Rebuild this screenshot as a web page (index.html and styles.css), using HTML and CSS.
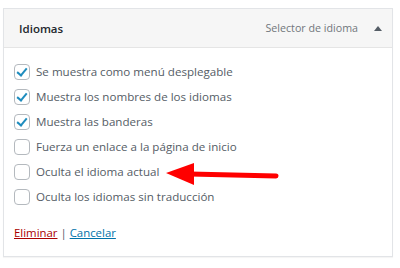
FILE: index.html
```html
<!DOCTYPE html>
<html lang="es">
<head>
    <meta charset="UTF-8">
    <title>Idiomas</title>
    <link rel="stylesheet" href="styles.css">
</head>
<body>
    <div class="widget">
        <div class="widget-top">
            <h3 class="widget-title">Idiomas</h3>
            <span class="widget-desc">Selector de idioma</span>
            <span class="toggle"></span>
        </div>
        <div class="widget-inside">
            <label class="opt"><input type="checkbox" checked><span class="box checked"></span>Se muestra como menú desplegable</label>
            <label class="opt"><input type="checkbox" checked><span class="box checked"></span>Muestra los nombres de los idiomas</label>
            <label class="opt"><input type="checkbox" checked><span class="box checked"></span>Muestra las banderas</label>
            <label class="opt"><input type="checkbox"><span class="box"></span>Fuerza un enlace a la página de inicio</label>
            <label class="opt"><input type="checkbox"><span class="box"></span>Oculta el idioma actual
                <svg class="arrow" width="114" height="24" viewBox="0 0 114 24">
                    <line x1="24" y1="11" x2="110" y2="13" stroke="#f00" stroke-width="5" stroke-linecap="round"/>
                    <polygon points="0,10 28,0 28,22" fill="#f00"/>
                </svg>
            </label>
            <label class="opt"><input type="checkbox"><span class="box"></span>Oculta los idiomas sin traducción</label>
            <div class="actions">
                <a href="#" class="delete">Eliminar</a> | <a href="#" class="cancel">Cancelar</a>
            </div>
        </div>
    </div>
</body>
</html>
```
FILE: styles.css
```css
body {
    margin: 0;
    padding: 8px 7px 10px 3px;
    background: #fff;
    font-family: "Open Sans", "Noto Sans", sans-serif;
}
.widget {
    border: 1px solid #e2e4e7;
    box-shadow: 0 1px 1px rgba(0, 0, 0, 0.04);
}
.widget-top {
    display: flex;
    align-items: center;
    height: 38px;
    background: #f6f6f6;
    border-bottom: 1px solid #e5e5e5;
    padding: 0 10px 0 15px;
}
.widget-title {
    flex: 1;
    margin: 0;
    font-size: 11.5px;
    font-weight: 600;
    color: #23282d;
}
.widget-desc {
    font-size: 10.7px;
    color: #72777c;
}
.toggle {
    width: 0;
    height: 0;
    margin-left: 16px;
    border-left: 4px solid transparent;
    border-right: 4px solid transparent;
    border-bottom: 5px solid #555d66;
}
.widget-inside {
    padding: 11px 10px 15px 10px;
}
.opt {
    display: flex;
    align-items: center;
    height: 25px;
    font-size: 11.6px;
    color: #555d66;
    position: relative;
}
.opt input {
    display: none;
}
.box {
    width: 14px;
    height: 14px;
    border: 1px solid #b4b9be;
    border-radius: 4px;
    margin-right: 6px;
    background: #fff;
    position: relative;
}
.box.checked::after {
    content: "";
    position: absolute;
    left: 4px;
    top: 1px;
    width: 4px;
    height: 8px;
    border: solid #1e8cbe;
    border-width: 0 2.5px 2.5px 0;
    transform: rotate(40deg);
}
.arrow {
    position: absolute;
    left: 152px;
    top: 4px;
}
.actions {
    margin-top: 16px;
    font-size: 11.4px;
    line-height: 16px;
    color: #555d66;
}
.delete {
    color: #a00;
}
.cancel {
    color: #0073aa;
}
```
